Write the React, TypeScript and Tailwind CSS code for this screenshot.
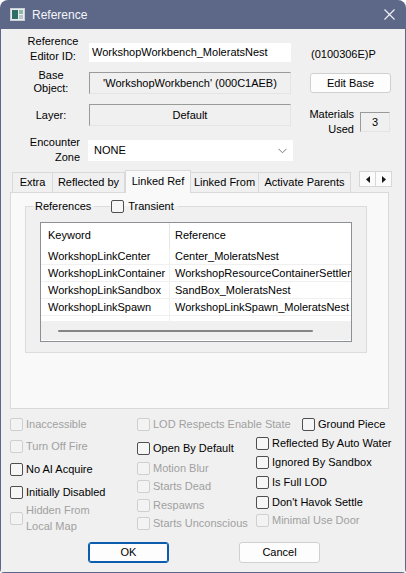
import type { ReactNode } from "react";

function Box({ disabled }: { disabled?: boolean }) {
  return (
    <span
      className={
        "block h-[13px] w-[13px] shrink-0 rounded-[2px] border " +
        (disabled ? "border-[#cfcfcf] bg-[#f3f3f3]" : "border-[#4f4f4f] bg-[#f6f6f6]")
      }
    />
  );
}

function Check({
  label,
  disabled,
  className = "",
}: {
  label: ReactNode;
  disabled?: boolean;
  className?: string;
}) {
  return (
    <div className={"flex h-[16px] items-center gap-[3px] whitespace-nowrap " + className}>
      <Box disabled={disabled} />
      <span className={disabled ? "text-[#a0a0a0]" : "text-black"}>{label}</span>
    </div>
  );
}

function Tab({ label, width, active }: { label: string; width: string; active?: boolean }) {
  if (active) {
    return (
      <div
        className={
          "relative z-10 -mb-px flex h-[23px] items-center justify-center border border-b-0 border-[#d9d9d9] bg-[#f9f9f9] pb-[2px] " +
          width
        }
      >
        {label}
      </div>
    );
  }
  return (
    <div
      className={
        "flex h-[20px] items-center justify-center border border-l-0 border-b-0 border-[#d9d9d9] bg-[#f0f0f0] first:border-l " +
        width
      }
    >
      {label}
    </div>
  );
}

const links = [
  ["WorkshopLinkCenter", "Center_MoleratsNest"],
  ["WorkshopLinkContainer", "WorkshopResourceContainerSettlement"],
  ["WorkshopLinkSandbox", "SandBox_MoleratsNest"],
  ["WorkshopLinkSpawn", "WorkshopLinkSpawn_MoleratsNest"],
];

export default function App() {
  return (
    <div className="flex h-[573px] w-[406px] flex-col overflow-hidden rounded-t-[8px] rounded-b-[4px] bg-[#5d6889] px-[1px] pb-[1px] font-['Liberation_Sans',Arial,sans-serif] text-[11px] text-black">
      {/* title bar */}
      <div className="flex h-[29px] shrink-0 items-center text-[#f4f5f8]">
        <svg className="ml-[9px]" width="15" height="13" viewBox="0 0 15 13">
          <rect x="0.5" y="0.5" width="14" height="12" fill="#e8ecef" stroke="#c9d0d6" />
          <rect x="2" y="2" width="6" height="9" fill="#2f6d68" />
          <rect x="9" y="2" width="4" height="4" fill="#8fb7a8" />
          <rect x="9" y="7" width="4" height="4" fill="#b9c4cc" />
        </svg>
        <span className="ml-[7px] text-[12px]">Reference</span>
        <svg className="ml-auto mr-[10px]" width="11" height="11" viewBox="0 0 11 11">
          <path d="M0.5 0.5 L10.5 10.5 M10.5 0.5 L0.5 10.5" stroke="#f2f3f7" strokeWidth="1.1" />
        </svg>
      </div>

      {/* dialog body */}
      <div className="flex flex-1 flex-col bg-[#f0f0f0]">
        <div className="mt-[5px] flex h-[30px]">
          <div className="ml-[21px] w-[62px] text-center leading-[15px]">
            Reference
            <br />
            Editor ID:
          </div>
          <div className="ml-[5px] mt-[9px] h-[19px] w-[202px] bg-white px-[3px] leading-[19px]">
            WorkshopWorkbench_MoleratsNest
          </div>
          <div className="ml-[20px] mt-[13px] leading-[14px]">(0100306E)P</div>
        </div>

        <div className="mt-[5px] flex h-[26px]">
          <div className="ml-[21px] w-[58px] text-center leading-[13px]">
            Base
            <br />
            Object:
          </div>
          <div className="ml-[9px] mt-[3px] flex h-[22px] w-[202px] items-center justify-center border border-b-[#e4e4e4] border-l-[#9a9a9a] border-r-[#e4e4e4] border-t-[#9a9a9a]">
            'WorkshopWorkbench' (000C1AEB)
          </div>
          <div className="ml-[19px] mt-[4px] flex h-[20px] w-[81px] items-center justify-center rounded-[3px] border border-[#d0d0d0] bg-[#fdfdfd]">
            Edit Base
          </div>
        </div>

        <div className="mt-[9px] flex h-[30px]">
          <div className="ml-[21px] w-[58px] text-center leading-[22px]">Layer:</div>
          <div className="ml-[9px] flex h-[22px] w-[202px] items-center justify-center border border-b-[#e4e4e4] border-l-[#9a9a9a] border-r-[#e4e4e4] border-t-[#9a9a9a]">
            Default
          </div>
          <div className="ml-[9px] mt-[3px] w-[54px] text-right leading-[15px]">
            Materials
            <br />
            Used
          </div>
          <div className="ml-[6px] mt-[8px] flex h-[20px] w-[30px] items-center justify-center border border-b-[#e4e4e4] border-l-[#9a9a9a] border-r-[#e4e4e4] border-t-[#9a9a9a]">
            3
          </div>
        </div>

        <div className="mt-[6px] flex h-[21px]">
          <div className="-mt-[5px] ml-[21px] w-[58px] text-right leading-[15px]">
            Encounter
            <br />
            Zone
          </div>
          <div className="ml-[8px] flex h-[21px] w-[205px] items-center justify-between bg-white pl-[6px] pr-[6px]">
            <span>NONE</span>
            <svg width="9" height="6" viewBox="0 0 9 6">
              <path d="M0.5 0.8 L4.5 4.8 L8.5 0.8" fill="none" stroke="#7a7a7a" strokeWidth="1" />
            </svg>
          </div>
        </div>

        {/* tab strip */}
        <div className="mt-[9px] flex h-[22px] items-end">
          <div className="ml-[11px] flex items-end">
            <Tab label="Extra" width="w-[41px]" />
            <Tab label="Reflected by" width="w-[72px]" />
            <Tab label="Linked Ref" width="w-[66px]" active />
            <Tab label="Linked From" width="w-[68px]" />
            <Tab label="Activate Parents" width="w-[92px]" />
          </div>
          <div className="mb-[5px] ml-[8px] flex h-[16px] w-[33px] border border-[#d6d6d6] bg-[#fbfbfb]">
            <div className="flex flex-1 items-center justify-center border-r border-[#d6d6d6]">
              <svg width="4" height="7" viewBox="0 0 4 7">
                <path d="M4 0 L0 3.5 L4 7 Z" fill="#1a1a1a" />
              </svg>
            </div>
            <div className="flex flex-1 items-center justify-center">
              <svg width="4" height="7" viewBox="0 0 4 7">
                <path d="M0 0 L4 3.5 L0 7 Z" fill="#1a1a1a" />
              </svg>
            </div>
          </div>
        </div>

        {/* tab page */}
        <div className="ml-[9px] h-[217px] w-[379px] border border-[#d9d9d9] bg-[#f9f9f9]">
          <fieldset className="ml-[14px] mt-[6px] h-[154px] w-[342px] border border-[#dcdcdc] bg-[#f0f0f0]">
            <legend className="ml-[7px] flex items-center">
              <span className="px-[2px] leading-[14px]">References</span>
              <span className="ml-[1px] h-px w-[16px] bg-[#dcdcdc]" />
              <span className="flex items-center gap-[4px] pl-[1px] pr-[4px]">
                <Box />
                <span className="leading-[14px]">Transient</span>
              </span>
            </legend>

            <div className="ml-[14px] mt-[9px] flex h-[120px] w-[312px] flex-col overflow-hidden border border-[#8c9096] bg-white">
              <div className="flex h-[25px] shrink-0">
                <div className="flex w-[129px] items-center border-r border-[#e5e5e5] pl-[7px]">Keyword</div>
                <div className="flex items-center pl-[5px]">Reference</div>
              </div>
              {links.map(([k, r]) => (
                <div key={k} className="flex h-[17px] shrink-0 border-b border-[#f0f0f0]">
                  <div className="flex w-[129px] shrink-0 items-center overflow-hidden whitespace-nowrap border-r border-[#f0f0f0] pl-[7px]">
                    {k}
                  </div>
                  <div className="flex min-w-0 flex-1 items-center overflow-hidden whitespace-nowrap pl-[5px]">{r}</div>
                </div>
              ))}
              <div className="flex h-[5px] shrink-0">
                <div className="w-[129px] border-r border-[#f0f0f0]" />
              </div>
              <div className="flex h-[19px] shrink-0 items-center bg-[#f0f0f0]">
                <div className="ml-[17px] h-[2px] w-[255px] rounded-full bg-[#858585]" />
              </div>
            </div>
          </fieldset>
        </div>

        {/* flags */}
        <div className="flex h-[127px]">
          <div className="ml-[9px] flex w-[127px] flex-col">
            <Check className="mt-[7px]" label="Inaccessible" disabled />
            <Check className="mt-[6px]" label="Turn Off Fire" disabled />
            <Check className="mt-[7px]" label="No AI Acquire" />
            <Check className="mt-[7px]" label="Initially Disabled" />
            <Check
              className="mt-[2px] h-[32px] leading-[16px]"
              label={
                <>
                  Hidden From
                  <br />
                  Local Map
                </>
              }
              disabled
            />
          </div>
          <div className="flex w-[119px] flex-col">
            <Check className="mt-[7px]" label="LOD Respects Enable State" disabled />
            <Check className="mt-[8px]" label="Open By Default" />
            <Check className="mt-[4px]" label="Motion Blur" disabled />
            <Check className="mt-[2px]" label="Starts Dead" disabled />
            <Check className="mt-[3px]" label="Respawns" disabled />
            <Check className="mt-[2px]" label="Starts Unconscious" disabled />
          </div>
          <div className="flex flex-col">
            <Check className="ml-[46px] mt-[7px]" label="Ground Piece" />
            <Check className="mt-[3px]" label="Reflected By Auto Water" />
            <Check className="mt-[3px]" label="Ignored By Sandbox" />
            <Check className="mt-[4px]" label="Is Full LOD" />
            <Check className="mt-[4px]" label="Don't Havok Settle" />
            <Check className="mt-[2px]" label="Minimal Use Door" disabled />
          </div>
        </div>

        <div className="mt-[6px] flex">
          <div className="ml-[87px] flex h-[21px] w-[81px] items-center justify-center rounded-[3px] border border-[#0b5cad] bg-[#fdfdfd] shadow-[inset_0_0_0_1px_#0b5cad]">
            OK
          </div>
          <div className="ml-[70px] flex h-[21px] w-[81px] items-center justify-center rounded-[3px] border border-[#d0d0d0] bg-[#fdfdfd]">
            Cancel
          </div>
        </div>
      </div>
    </div>
  );
}
